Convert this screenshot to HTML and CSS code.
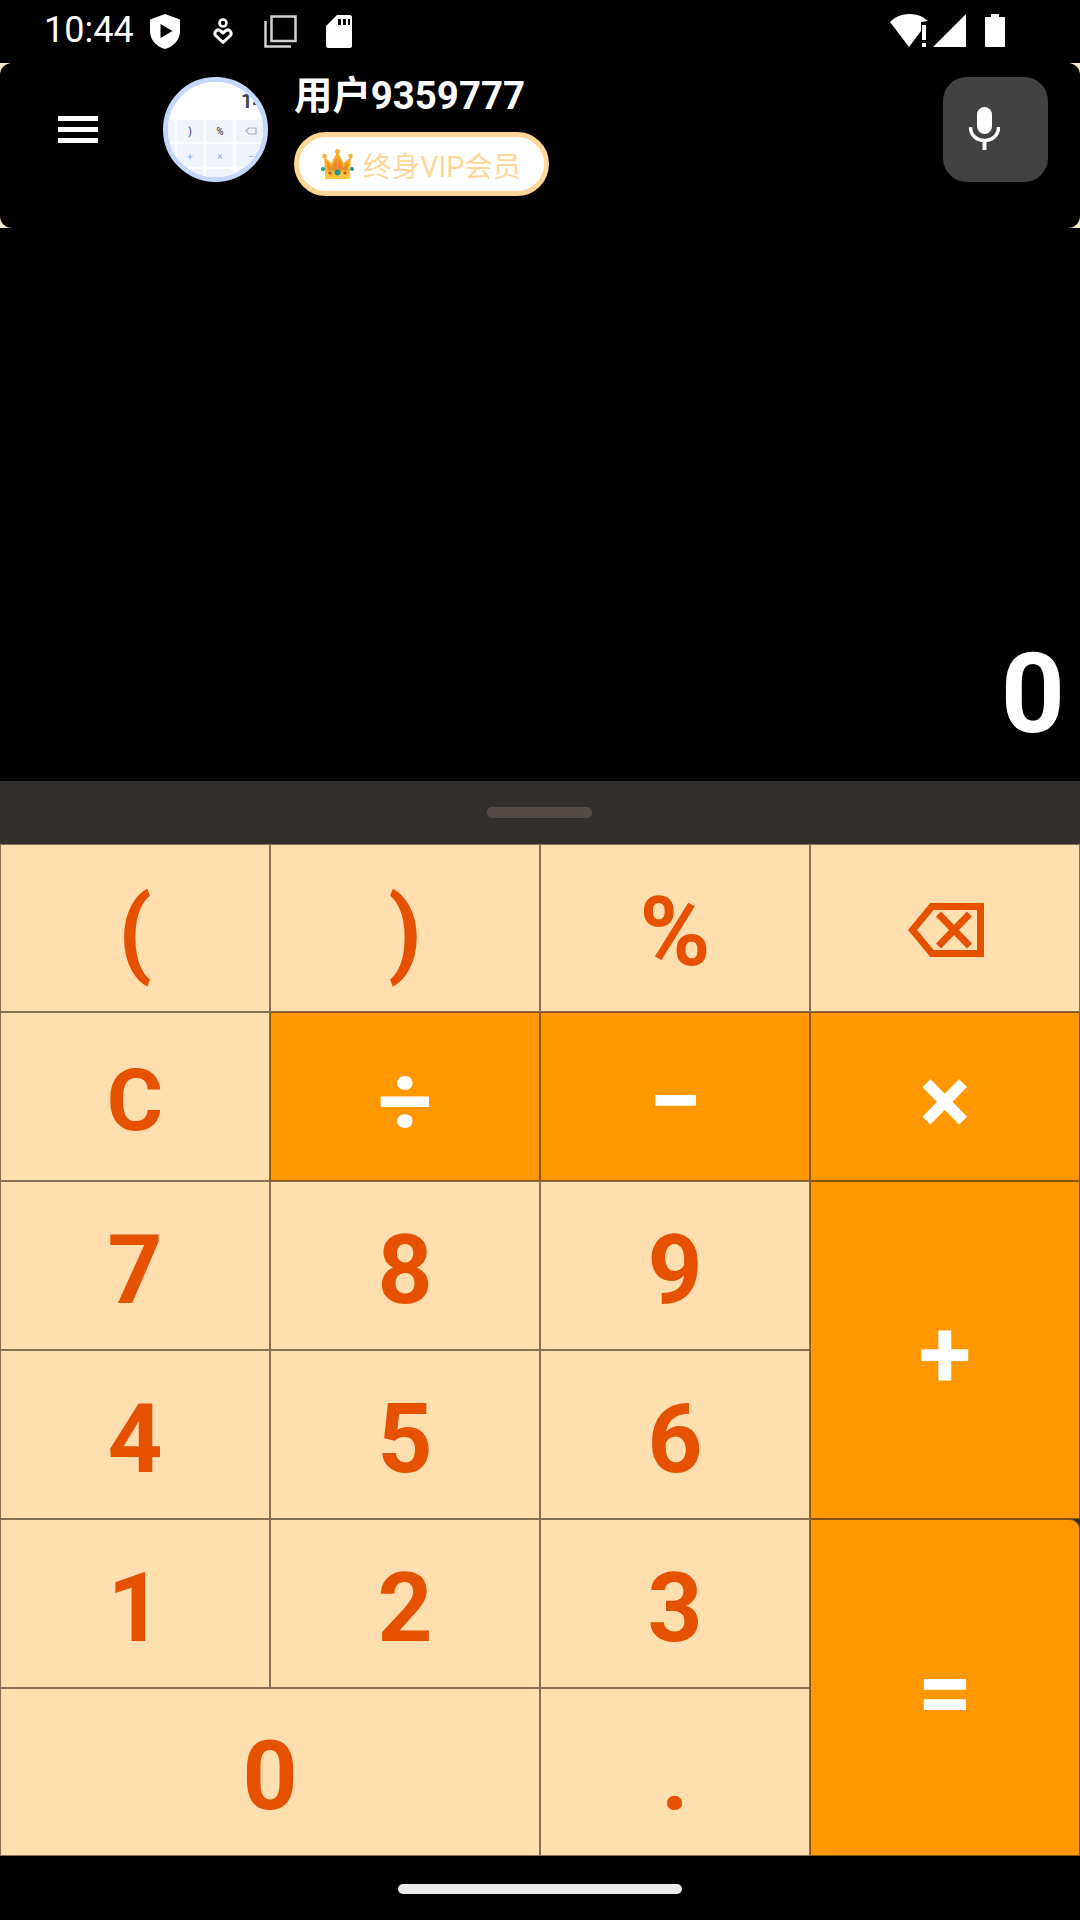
FILE: index.html
```html
<!DOCTYPE html>
<html lang="zh">
<head>
    <meta charset="UTF-8">
    <meta name="viewport" content="width=device-width, initial-scale=1.0">
    <title>计算器</title>
    <link rel="stylesheet" href="styles.css">
</head>
<body>
    <div class="statusbar">
        <span class="time">10:44</span>
        <svg class="st-shield" width="30" height="35" viewBox="0 0 30 35"><path fill="#fff" fill-rule="evenodd" d="M15 0 30 5.5V17C30 26 23.500 32.500 15 35 6.500 32.500 0 26 0 17V5.500ZM10.500 10V24L22.500 17Z"/></svg>
        <svg class="st-heart" width="20" height="27" viewBox="0 0 20 27"><circle cx="10" cy="5" r="3.500" fill="none" stroke="#fff" stroke-width="2.600"/><path fill="none" stroke="#fff" stroke-width="3" stroke-linejoin="round" d="M10 24.500 2.500 17.500C0.500 14 4 10.500 7 12.500L10 15 13 12.500C16 10.500 19.500 14 17.500 17.500Z"/></svg>
        <svg class="st-copy" width="33" height="33" viewBox="0 0 33 33"><path fill="none" stroke="#d0d0d0" stroke-width="2.500" d="M7.500 1.500H31.500V26H7.500Z"/><path fill="none" stroke="#d0d0d0" stroke-width="2.500" d="M1.500 6V31.500H27"/></svg>
        <svg class="st-sd" width="26" height="33" viewBox="0 0 26 33"><path fill="#fff" fill-rule="evenodd" d="M11 0H24C25 0 26 1 26 2V31C26 32 25 33 24 33H2C1 33 0 32 0 31V11ZM12 4V10H15V4ZM17 4V10H20V4ZM22 4V10H24V4Z"/></svg>
        <div class="st-right">
            <svg width="41" height="33" viewBox="0 0 41 33"><path fill="#fff" d="M0 8C10 -2.500 28 -2.500 38 7L31 8V17L19 33Z"/><path fill="#fff" d="M32 11H36V26H32ZM32 29H36V33H32Z"/></svg>
            <svg class="st-signal" width="33" height="33" viewBox="0 0 33 33"><path fill="#fff" d="M33 0V33H0Z"/></svg>
            <svg class="st-battery" width="20" height="33" viewBox="0 0 20 33"><path fill="#fff" d="M6 0H14V3H19C19.500 3 20 3.500 20 4V32C20 32.500 19.500 33 19 33H1C0.500 33 0 32.500 0 32V4C0 3.500 0.500 3 1 3H6Z"/></svg>
        </div>
    </div>

    <div class="header-wrap">
        <header class="header">
            <div class="menu-icon"><span></span><span></span><span></span></div>
            <div class="avatar">
                <svg width="95" height="95" viewBox="0 0 95 95" font-family="Roboto, sans-serif">
                    <rect width="95" height="95" fill="#fff"/>
                    <rect y="37" width="95" height="58" fill="#fbfcfe"/>
                    <rect x="-8" y="38" width="15" height="22" rx="3" fill="#f0f3f9"/>
                    <rect x="9" y="38" width="26" height="22" rx="3" fill="#f0f3f9"/>
                    <rect x="38" y="38" width="27" height="22" rx="3" fill="#f0f3f9"/>
                    <rect x="68" y="38" width="30" height="22" rx="3" fill="#f0f3f9"/>
                    <rect x="-8" y="62" width="15" height="23" rx="3" fill="#f0f3f9"/>
                    <rect x="9" y="62" width="26" height="23" rx="3" fill="#f0f3f9"/>
                    <rect x="38" y="62" width="27" height="23" rx="3" fill="#f0f3f9"/>
                    <rect x="68" y="62" width="30" height="23" rx="3" fill="#f0f3f9"/>
                    <rect x="9" y="87" width="26" height="12" rx="3" fill="#f0f3f9"/>
                    <rect x="38" y="87" width="27" height="12" rx="3" fill="#f0f3f9"/>
                    <rect x="68" y="87" width="30" height="12" rx="3" fill="#f0f3f9"/>
                    <text x="73" y="26" font-size="20" font-weight="700" fill="#3c4350">14</text>
                    <text x="22" y="53" font-size="10" font-weight="700" fill="#5d6573" text-anchor="middle">)</text>
                    <text x="52" y="53" font-size="10" font-weight="700" fill="#5d6573" text-anchor="middle">%</text>
                    <text x="22" y="78" font-size="10" font-weight="700" fill="#9bbdf0" text-anchor="middle">+</text>
                    <text x="52" y="78" font-size="10" font-weight="700" fill="#9bbdf0" text-anchor="middle">×</text>
                    <text x="83" y="78" font-size="10" font-weight="700" fill="#9bbdf0" text-anchor="middle">−</text>
                    <path fill="none" stroke="#a2a9b5" stroke-width="1.200" d="M78 49 81 46H88V52H81Z"/>
                </svg>
            </div>
            <div class="user">
                <div class="user-name">用户9359777</div>
                <div class="vip">
                    <svg width="33" height="31" viewBox="0 0 33 31">
                        <path fill="#f7b02c" d="M3 8 10.500 14 16.500 2 22.500 14 30 8 28.500 30H4.500Z"/>
                        <path fill="#e88a2c" d="M6 12 10.500 19 15.500 8 16.500 20 17.500 8 22.500 19 27 12 26.500 21H6.500Z"/>
                        <path fill="#fcc53a" d="M4.500 21C12 24.500 21 24.500 28.500 21L28 30H5Z"/>
                        <circle cx="3.500" cy="7" r="2.200" fill="#f7b02c"/>
                        <circle cx="16.500" cy="2.500" r="2.500" fill="#f7b02c"/>
                        <circle cx="29.500" cy="7" r="2.200" fill="#f7b02c"/>
                        <circle cx="16.500" cy="23.500" r="3" fill="#1d9a8c"/>
                        <circle cx="2" cy="20" r="2" fill="#1d9a8c"/>
                        <circle cx="31" cy="20" r="2" fill="#1d9a8c"/>
                        <circle cx="9" cy="24" r="1.600" fill="#d8433a"/>
                        <circle cx="24" cy="24" r="1.600" fill="#d8433a"/>
                    </svg>
                    <span>终身VIP会员</span>
                </div>
            </div>
            <button class="mic-btn">
                <svg width="31" height="43" viewBox="0 0 31 43"><rect x="8" y="0" width="15" height="27" rx="7.500" fill="#fff"/><path fill="none" stroke="#fff" stroke-width="3.500" d="M1.500 20C1.500 38 29.500 38 29.500 20"/><rect x="13.500" y="33" width="4" height="10" fill="#fff"/></svg>
            </button>
        </header>
    </div>

    <div class="display">0</div>

    <div class="handle-bar"><span class="handle"></span></div>

    <div class="keys">
        <div class="key">(</div>
        <div class="key">)</div>
        <div class="key">%</div>
        <div class="key">
            <svg width="76" height="54" viewBox="0 0 76 54"><path fill="none" stroke="#e65100" stroke-width="7" d="M72.500 3.500H24L4.500 27 24 50.500H72.500Z"/><path fill="none" stroke="#e65100" stroke-width="7" d="M30.500 11 61.500 43M61.500 11 30.500 43"/></svg>
        </div>
        <div class="key key-c">C</div>
        <div class="key op">÷</div>
        <div class="key op">−</div>
        <div class="key op">×</div>
        <div class="key">7</div>
        <div class="key">8</div>
        <div class="key">9</div>
        <div class="key op tall">+</div>
        <div class="key">4</div>
        <div class="key">5</div>
        <div class="key">6</div>
        <div class="key">1</div>
        <div class="key">2</div>
        <div class="key">3</div>
        <div class="key op tall equals">=</div>
        <div class="key wide">0</div>
        <div class="key">.</div>
    </div>

    <div class="navbar"><span class="nav-pill"></span></div>
</body>
</html>
```

FILE: styles.css
```css
* {
    box-sizing: border-box;
}
html, body {
    margin: 0;
    padding: 0;
}
body {
    width: 1080px;
    height: 1920px;
    background-color: #000;
    color: #fff;
    font-family: Roboto, 'Noto Sans CJK SC', sans-serif;
    display: flex;
    flex-direction: column;
    overflow: hidden;
}
.statusbar {
    height: 63px;
    padding: 14px 75px 0 44px;
    display: flex;
    align-items: flex-start;
}
.time {
    font-size: 36px;
    line-height: 32px;
    width: 91px;
}
.st-shield {
    margin-left: 15px;
}
.st-heart {
    margin: 4px 0 0 33px;
}
.st-copy {
    margin: 1px 0 0 31px;
}
.st-sd {
    margin: 1px 0 0 29px;
}
.st-right {
    margin-left: auto;
    display: flex;
}
.st-signal {
    margin-left: 2px;
}
.st-battery {
    margin-left: 19px;
}
.header-wrap {
    height: 165px;
    background-color: #ffe9cc;
}
.header {
    height: 100%;
    background-color: #000;
    border-radius: 12px;
    padding: 14px 32px 0 58px;
    display: flex;
    align-items: flex-start;
}
.menu-icon {
    width: 40px;
    margin-top: 39px;
    display: flex;
    flex-direction: column;
    gap: 6px;
}
.menu-icon span {
    height: 5px;
    background-color: #fff;
}
.avatar {
    width: 105px;
    height: 105px;
    margin-left: 65px;
    border: 5px solid #c5d8fb;
    border-radius: 50%;
    overflow: hidden;
    background-color: #fff;
}
.avatar svg {
    display: block;
}
.user {
    margin-left: 26px;
    display: flex;
    flex-direction: column;
    align-items: flex-start;
}
.user-name {
    font-size: 38.400px;
    font-weight: 700;
    line-height: 44px;
    margin-top: -3px;
}
.vip {
    width: 255px;
    height: 64px;
    margin-top: 14px;
    padding-left: 22px;
    background-color: #fff;
    border: 5px solid #ffd699;
    border-radius: 32px;
    display: flex;
    align-items: center;
    gap: 9px;
    color: #ffd699;
    font-size: 28.600px;
}
.mic-btn {
    width: 105px;
    height: 105px;
    margin-left: auto;
    padding: 30px 0 0 26px;
    background-color: #424242;
    border: none;
    border-radius: 24px;
    display: flex;
    align-items: flex-start;
}
.display {
    height: 553px;
    padding: 0 15px 20px 0;
    display: flex;
    align-items: flex-end;
    justify-content: flex-end;
    font-size: 112px;
    font-weight: 700;
    line-height: 1.2;
}
.handle-bar {
    height: 63px;
    background-color: #322e2b;
    padding: 26px 1px 0 0;
    display: flex;
    justify-content: center;
    align-items: flex-start;
}
.handle {
    width: 105px;
    height: 11px;
    background-color: #544b47;
    border-radius: 5px;
}
.keys {
    height: 1012px;
    background-color: #322e2b;
    display: grid;
    grid-template-columns: repeat(4, 1fr);
    grid-template-rows: 168px 169px 169px 169px 169px 168px;
}
.key {
    background-color: #ffdfb0;
    color: #e65100;
    border: 1px solid rgba(60, 42, 24, 0.62);
    padding-top: 8px;
    display: flex;
    align-items: center;
    justify-content: center;
    font-size: 96px;
    font-weight: 700;
    line-height: 1;
}
.key svg {
    margin: -4px 0 0 2px;
}
.key-c {
    font-size: 86px;
}
.op {
    background-color: #ff9800;
    color: #fff;
}
.tall {
    grid-column: 4;
    grid-row: span 2;
}
.equals {
    border-top-right-radius: 10px;
}
.wide {
    grid-column: span 2;
}
.navbar {
    height: 64px;
    display: flex;
    justify-content: center;
    padding-top: 28px;
}
.nav-pill {
    width: 284px;
    height: 10px;
    background-color: #ebebeb;
    border-radius: 5px;
}
```
